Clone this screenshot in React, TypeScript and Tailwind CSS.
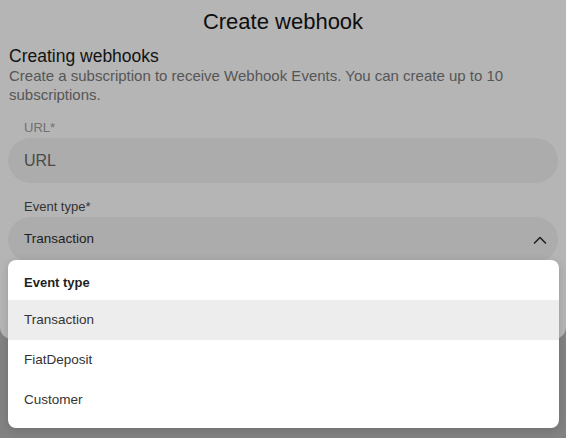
import { useState } from 'react';

const eventTypes = ['Transaction', 'FiatDeposit', 'Customer'];

function ChevronUp() {
  return (
    <svg width="16" height="16" viewBox="0 0 16 16" fill="none">
      <path d="M2.5 11L8 5.5L13.5 11" stroke="currentColor" strokeWidth="1.6" strokeLinecap="round" strokeLinejoin="round" />
    </svg>
  );
}

export default function App() {
  const [selected, setSelected] = useState('Transaction');

  return (
    <div
      className="relative w-[566px] h-[438px] overflow-hidden bg-[#b7b7b7]"
      style={{ fontFamily: '"Liberation Sans", Arial, sans-serif' }}
    >
      {/* Dialog */}
      <div className="h-[339px] bg-white rounded-b-xl px-2 pt-[8px]">
        <h1 className="text-center text-[22px] leading-[28px] text-[#141414]">Create webhook</h1>

        <div className="mt-[10px]">
          <h2 className="text-[17.5px] leading-[20px] text-[#1a1a1a] pl-[1px]">Creating webhooks</h2>
          <p className="text-[15px] leading-[19px] text-[#7a7a7a] pl-[1px]">
            Create a subscription to receive Webhook Events. You can create up to 10 subscriptions.
          </p>
        </div>

        <div className="mt-[16px]">
          <label className="block pl-4 text-[13px] leading-[16px] text-[#a0a0a0]">URL*</label>
          <div className="mt-[2px] h-[45px] rounded-full bg-[#f3f3f3] flex items-center px-4">
            <span className="text-[16px] text-[#6a6a6a]">URL</span>
          </div>
        </div>

        <div className="mt-[16px]">
          <label className="block pl-4 text-[13px] leading-[16px] text-[#4a4a4a]">Event type*</label>
          <div className="mt-[2px] h-[45px] rounded-full bg-[#f3f3f3] flex items-center justify-between pl-4 pr-[10px]">
            <span className="text-[13.5px] text-[#2e2e2e]">{selected}</span>
            <span className="text-[#2e2e2e]">
              <ChevronUp />
            </span>
          </div>
        </div>
      </div>

      {/* Backdrop */}
      <div className="absolute inset-0 bg-black/[0.29]" />

      {/* Select menu */}
      <div className="absolute left-[8px] top-[260px] w-[551px] rounded-lg bg-white shadow-[0_2px_8px_rgba(0,0,0,0.15)] pb-[8px]">
        <div className="h-[40px] flex items-end pb-[8px] px-4 text-[13px] font-bold text-[#1f1f1f]">Event type</div>
        <ul>
          {eventTypes.map(type => (
            <li
              key={type}
              onClick={() => setSelected(type)}
              className={`h-[40px] px-4 flex items-center text-[13.5px] text-[#333333] cursor-pointer ${
                type === selected ? 'bg-[#ededed]' : ''
              }`}
            >
              {type}
            </li>
          ))}
        </ul>
      </div>
    </div>
  );
}
